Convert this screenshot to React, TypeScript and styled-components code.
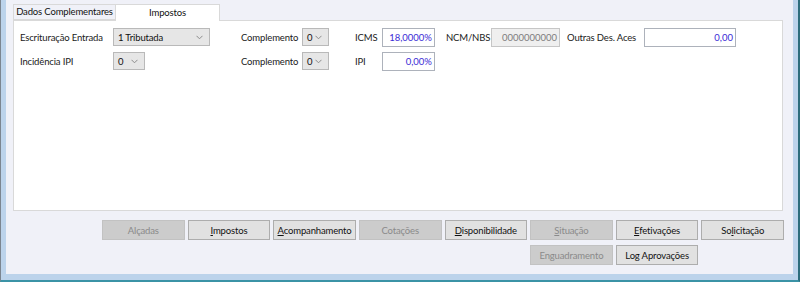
import React from "react";
import styled, { createGlobalStyle } from "styled-components";

const FONT = `Lato, "Liberation Sans", Arial, sans-serif`;

const Global = createGlobalStyle`
  html, body { margin: 0; padding: 0; background: #f0f1f8; }
  body { font-family: ${FONT}; font-size: 9.5px; color: #1a1a1a; }
  * { box-sizing: border-box; }
`;

const Window = styled.div`
  width: 800px;
  height: 282px;
  display: flex;
  border-left: 1px solid #7c8590;
  border-right: 2px solid #2d6d7c;
  border-bottom: 2px solid #3b93a6;
  overflow: hidden;
`;

const Frame = styled.div`
  flex: 1;
  display: flex;
  flex-direction: column;
  background: #f0f1f8;
  border-left: 5px solid #bcd3eb;
  border-right: 5px solid #bcd3eb;
  border-bottom: 6px solid #bcd3eb;
  padding: 3px 10px 0 7px;
`;

const TabStrip = styled.div`
  display: flex;
  align-items: flex-end;
  height: 17px;
  position: relative;
  z-index: 1;
`;

const Tab = styled.div<{ $active?: boolean }>`
  height: ${(p) => (p.$active ? "17px" : "16px")};
  width: ${(p) => (p.$active ? "104px" : "103px")};
  display: flex;
  align-items: center;
  justify-content: center;
  white-space: nowrap;
  background: ${(p) => (p.$active ? "#ffffff" : "#f0f1f8")};
  border: 1px solid #d9d9d9;
  border-bottom: ${(p) => (p.$active ? "none" : "1px solid #d9d9d9")};
  border-left: ${(p) => (p.$active ? "none" : "1px solid #d9d9d9")};
  margin-bottom: ${(p) => (p.$active ? "-1px" : "0")};
  padding-bottom: 2px;
  font-size: 9.5px;
  letter-spacing: -0.15px;
  color: #111;
`;

const Panel = styled.div`
  height: 191px;
  background: #ffffff;
  border: 1px solid #d9d9d9;
  padding: 7px 6px 0 6px;
`;

const FormGrid = styled.div`
  display: grid;
  grid-template-columns: 93px 128px 61px 53px 27px 53px 56px 76px 77px 92px;
  grid-auto-rows: 18px;
  row-gap: 6px;
  align-items: center;
`;

const Label = styled.span<{ $pad?: number }>`
  font-size: 9.5px;
  letter-spacing: -0.15px;
  color: #1a1a1a;
  white-space: nowrap;
  padding-left: ${(p) => p.$pad ?? 0}px;
`;

const SelectBox = styled.div<{ $w: number }>`
  width: ${(p) => p.$w}px;
  height: 18px;
  background: #e6e6e6;
  border: 1px solid #b9b9b9;
  display: flex;
  align-items: center;
  justify-content: space-between;
  padding: 0 6px 0 4px;
  font-size: 9.5px;
  letter-spacing: -0.15px;
  color: #111;
`;

const Input = styled.div<{ $w: number; $disabled?: boolean }>`
  width: ${(p) => p.$w}px;
  height: 19px;
  background: ${(p) => (p.$disabled ? "#efefef" : "#ffffff")};
  border: 1px solid ${(p) => (p.$disabled ? "#c6c6c6" : "#adb2bb")};
  display: flex;
  align-items: center;
  justify-content: flex-end;
  padding: 0 2px;
  font-size: 9.5px;
  color: ${(p) => (p.$disabled ? "#7d7d7d" : "#3b2bd6")};
`;

const ButtonGrid = styled.div`
  align-self: flex-end;
  margin-top: 9px;
  width: 682px;
  margin-right: -1px;
  display: grid;
  grid-template-columns: repeat(8, 1fr);
  column-gap: 3px;
  row-gap: 5px;
  grid-auto-rows: 20px;
`;

const Button = styled.div<{ $disabled?: boolean; $col?: number }>`
  grid-column: ${(p) => (p.$col ? `${p.$col} / span 1` : "auto")};
  display: flex;
  align-items: center;
  justify-content: center;
  background: ${(p) => (p.$disabled ? "#cccccc" : "#e1e1e1")};
  border: 1px solid ${(p) => (p.$disabled ? "#c2c2c2" : "#adadad")};
  color: ${(p) => (p.$disabled ? "#8a8a8a" : "#111")};
  font-size: 9.5px;
  letter-spacing: -0.15px;
  white-space: nowrap;
  u { text-decoration: underline; text-underline-offset: 1px; }
`;

const Chevron = () => (
  <svg width="7" height="5" viewBox="0 0 7 5">
    <polyline points="0.5,0.8 3.5,3.8 6.5,0.8" fill="none" stroke="#8c8c8c" strokeWidth="1" />
  </svg>
);

const Select = ({ w, value }: { w: number; value: string }) => (
  <SelectBox $w={w}>
    <span>{value}</span>
    <Chevron />
  </SelectBox>
);

const M = ({ k, rest, pre = "" }: { k: string; rest: string; pre?: string }) => (
  <span>
    {pre}
    <u>{k}</u>
    {rest}
  </span>
);

export default function App() {
  return (
    <>
      <Global />
      <Window>
        <Frame>
          <TabStrip>
            <Tab>Dados Complementares</Tab>
            <Tab $active>Impostos</Tab>
          </TabStrip>
          <Panel>
            <FormGrid>
              <Label>Escrituração Entrada</Label>
              <Select w={97} value="1 Tributada" />
              <Label>Complemento</Label>
              <Select w={27} value="0" />
              <Label>ICMS</Label>
              <Input $w={53}>18,0000%</Input>
              <Label $pad={11}>NCM/NBS</Label>
              <Input $w={69} $disabled>0000000000</Input>
              <Label>Outras Des. Aces</Label>
              <Input $w={92}>0,00</Input>

              <Label>Incidência IPI</Label>
              <Select w={32} value="0" />
              <Label>Complemento</Label>
              <Select w={27} value="0" />
              <Label>IPI</Label>
              <Input $w={53}>0,00%</Input>
            </FormGrid>
          </Panel>
          <ButtonGrid>
            <Button $disabled>Alçadas</Button>
            <Button><M k="I" rest="mpostos" /></Button>
            <Button><M k="A" rest="companhamento" /></Button>
            <Button $disabled>Cotações</Button>
            <Button><M k="D" rest="isponibilidade" /></Button>
            <Button $disabled><M k="S" rest="ituação" /></Button>
            <Button><M k="E" rest="fetivações" /></Button>
            <Button><M pre="So" k="l" rest="icitação" /></Button>
            <Button $disabled $col={6}>Enguadramento</Button>
            <Button $col={7}>Log Aprovações</Button>
          </ButtonGrid>
        </Frame>
      </Window>
    </>
  );
}
